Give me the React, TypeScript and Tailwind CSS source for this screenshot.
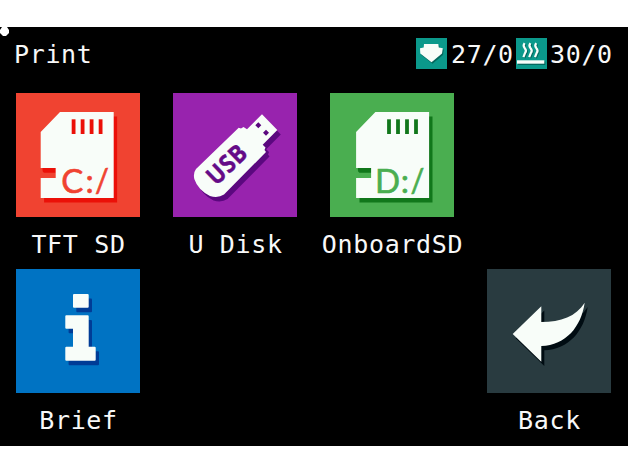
import type { ReactNode } from "react";

const sdCard =
  "M44 19H97.7V105H24.7V85H39.7V75H24.7V39Z";
const usbBody =
  "M89 21.3L104.3 37L89.7 51.7L92.5 54.5L91.5 57L93 59L51 101.5Q45 105.5 37 103Q25 97 21.3 86Q20 80 23 76L65.7 34.7L68 35.5L70.5 34L74 36.3Z";
const backArrow =
  "M25.7 65L54.3 37.3V53C74 53 89 47.5 97.7 33.7C94 58 79 76 54.3 77V92.7Z";
const infoBody =
  "M50.3 46.3H71.7Q72.7 46.3 72.7 47.3V77.7H78.7Q79.7 77.7 79.7 78.7V90.7Q79.7 91.7 78.7 91.7H50.3Q49.3 91.7 49.3 90.7V78.7Q49.3 77.7 50.3 77.7H57V59.7H50.3Q49.3 59.7 49.3 58.7V47.3Q49.3 46.3 50.3 46.3Z";

function Art({ children }: { children: ReactNode }) {
  return (
    <svg viewBox="0 0 124 124" className="block size-full">
      {children}
    </svg>
  );
}

function SdArt({ letter, color, shade, shift = 0 }: { letter: string; color: string; shade: string; shift?: number }) {
  return (
    <Art>
      <g transform={`translate(${shift} 0)`}>
        <path d={sdCard} transform="translate(3.4 4.6)" fill={shade} />
        <path d="M24.7 75H39.7V85H24.7Z" fill={color} />
        <path d="M26.5 75H39.7V79.7H28Q26.5 79 26.5 77Z" fill={shade} />
        <path d={sdCard} fill="#f8fdf9" />
        {[55.7, 64.7, 73.7, 82.7].map((x) => (
          <rect key={x} x={x} y={26.3} width={3.8} height={14.7} fill={shade} />
        ))}
        <g fill={color} stroke={color} strokeWidth={0.6} className="font-['Lato',sans-serif] text-[33px]">
          <text x={letter === "C" ? 45.3 : 43.5} y={100}>{letter}</text>
          <text x={69.4} y={100}>:</text>
          <text x={79} y={98.5} textLength={14.5} lengthAdjust="spacingAndGlyphs">/</text>
        </g>
      </g>
    </Art>
  );
}

function UsbArt() {
  return (
    <Art>
      <path d={usbBody} transform="translate(3.5 4.5)" fill="#5b087f" />
      <path d={usbBody} fill="#f8fdf9" />
      <path d="M85.3 29.3l3 3-3 3-3-3zM93 36.8l3 3-3 3-3-3z" fill="#5b087f" />
      <text
        transform="translate(54 71.4) rotate(-44)"
        x={0}
        y={8.5}
        textAnchor="middle"
        textLength={46}
        lengthAdjust="spacingAndGlyphs"
        fill="#650b87"
        stroke="#650b87"
        strokeWidth={0.4}
        className="font-['Open_Sans',sans-serif] text-[25px] font-bold"
      >
        USB
      </text>
    </Art>
  );
}

function InfoArt() {
  return (
    <Art>
      <g transform="translate(3.3 4.6)" fill="#003c96">
        <rect x={57} y={25} width={15.7} height={13.7} rx={1} />
        <path d={infoBody} />
      </g>
      <g fill="#f8fdf9">
        <rect x={57} y={25} width={15.7} height={13.7} rx={1} />
        <path d={infoBody} />
      </g>
    </Art>
  );
}

function BackArt() {
  return (
    <Art>
      <path d={backArrow} transform="translate(3 4.2)" fill="#000c12" />
      <path d={backArrow} fill="#f8fdf9" />
    </Art>
  );
}

function Tile({ label, className, color, children }: { label: string; className?: string; color: string; children: ReactNode }) {
  return (
    <button className={`flex w-[124px] flex-col items-center ${className ?? ""}`}>
      <span className={`block size-[124px] shrink-0 ${color}`}>{children}</span>
      <span className="mt-3 h-8 whitespace-pre pl-px leading-8">{label}</span>
    </button>
  );
}

function NozzleIcon() {
  const d = "M8 6H22.3L22.8 9.6L26.8 10.2L26 15.5L15.5 24.3L4.3 15.5L4 10.2L7.7 9.6Z";
  return (
    <svg viewBox="0 0 31 31" className="size-[31px] bg-[#0b998b]">
      <path d={d} transform="translate(1 1.4)" fill="#05685e" />
      <path d={d} fill="#f8fdf9" />
    </svg>
  );
}

function BedIcon() {
  const d = "M8.6 5.2q-2 2.6.2 5t.2 4.9l-1.6 4M14.4 5.2q-2 2.6.2 5t.2 4.9l-1.6 4M20.2 5.2q-2 2.6.2 5t.2 4.9l-1.6 4";
  return (
    <svg viewBox="0 0 31 31" className="size-[31px] bg-[#0b998b]">
      <path d={d} transform="translate(1 1)" fill="none" stroke="#05685e" strokeWidth={2} />
      <path d={d} fill="none" stroke="#f8fdf9" strokeWidth={2.2} />
      <path d="M2 23.5H29.3V27H2Z" fill="#05685e" />
      <path d="M1 22.3H28.3V25.7H1Z" fill="#f8fdf9" />
    </svg>
  );
}

export default function App() {
  return (
    <div className="h-[472px] w-[628px] bg-white pt-[27px]">
      <main className="relative h-[419px] overflow-hidden bg-black font-['DejaVu_Sans_Mono',monospace] text-[25px] tracking-[0.65px] text-[#f8f8f8]">
        <svg viewBox="0 0 10 10" className="absolute left-0 top-0 size-[10px]">
          <path d="M2 0H7L9 3V6L6 9H3L0 6V3Z" fill="#fff" />
        </svg>
        <header className="flex h-[66px] items-start justify-between pl-[14px] pr-[15px]">
          <h1 className="mt-3 leading-8">Print</h1>
          <div className="flex items-start pt-[11px] leading-[31px]">
            <NozzleIcon />
            <span className="ml-1 mt-px w-[65px]">27/0</span>
            <BedIcon />
            <span className="ml-[3px] mt-px w-[63px]">30/0</span>
          </div>
        </header>
        <div className="grid grid-cols-[repeat(4,124px)] gap-x-[33px] gap-y-2 px-4">
          <Tile label="TFT SD" color="bg-[#f04331]">
            <SdArt letter="C" color="#f04331" shade="#eb1008" />
          </Tile>
          <Tile label="U Disk" color="bg-[#9823ae]">
            <UsbArt />
          </Tile>
          <Tile label="OnboardSD" color="bg-[#4aae50]">
            <SdArt letter="D" color="#4aae50" shade="#11771b" shift={1.4} />
          </Tile>
          <Tile label="Brief" className="col-start-1 row-start-2" color="bg-[#0073c3]">
            <InfoArt />
          </Tile>
          <Tile label="Back" className="col-start-4 row-start-2" color="bg-[#293b40]">
            <BackArt />
          </Tile>
        </div>
      </main>
    </div>
  );
}
